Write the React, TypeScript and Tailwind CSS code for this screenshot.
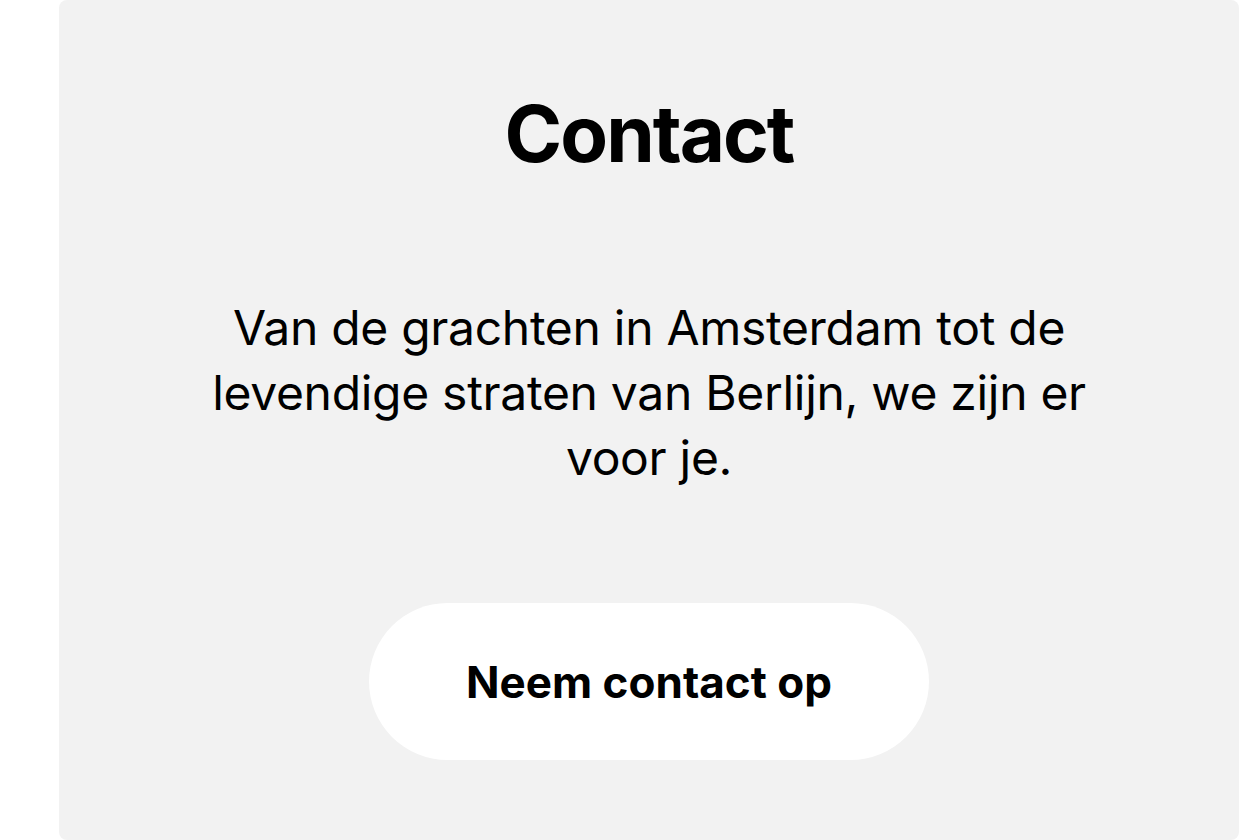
export default function App() {
  return (
    <div className="min-h-[840px] bg-white pl-[59px]" style={{ fontFamily: 'Inter, "Liberation Sans", sans-serif' }}>
      <section className="flex h-[840px] flex-col items-center rounded-lg bg-[#f2f2f2] pt-[94px] text-black">
        <h2 className="text-[78px] font-bold leading-[80px] tracking-[-2px]">Contact</h2>
        <p className="mt-[121px] max-w-[900px] text-center text-[48px] leading-[65px] tracking-[-0.3px]">
          Van de grachten in Amsterdam tot de levendige straten van Berlijn, we zijn er voor je.
        </p>
        <button
          type="button"
          className="mt-[113px] flex h-[157px] w-[560px] items-center justify-center rounded-full bg-white text-[44px] font-bold"
        >
          Neem contact op
        </button>
      </section>
    </div>
  );
}
